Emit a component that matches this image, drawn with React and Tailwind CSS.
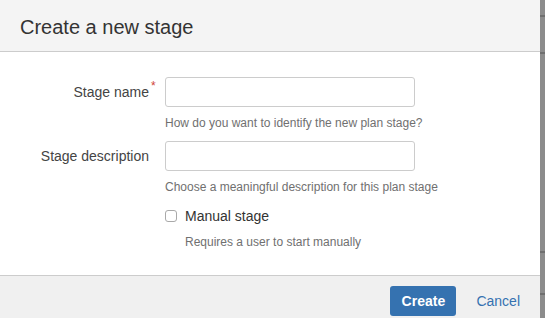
import React from 'react'

export default function App() {
  return (
    <div className="flex h-[318px] w-[545px] overflow-hidden bg-white font-['Liberation_Sans',Arial,sans-serif]">
      <div className="flex w-[540px] flex-col">
        {/* Header */}
        <div className="flex h-[52px] shrink-0 items-center border-b border-[#cccccc] bg-[#f4f4f4] px-5 pt-[2px]">
          <h2 className="text-[20px] leading-7 text-[#333333]">Create a new stage</h2>
        </div>

        {/* Body */}
        <div className="h-[223px] shrink-0 bg-white pt-[25px]">
          <FieldRow label="Stage name" required help="How do you want to identify the new plan stage?" />
          <div className="h-[10px]" />
          <FieldRow label="Stage description" help="Choose a meaningful description for this plan stage" />

          <div className="mt-[11px] pl-[165px]">
            <label className="flex items-center gap-[8px] text-[14px] leading-5 text-[#333333]">
              <span className="h-[12px] w-[12px] rounded-[3px] border border-[#a9a9a9] bg-white" />
              Manual stage
            </label>
            <p className="mt-2 pl-5 text-[12px] leading-4 text-[#707070]">Requires a user to start manually</p>
          </div>
        </div>

        {/* Footer */}
        <div className="flex flex-1 items-start justify-end border-t border-[#cccccc] bg-[#f0f0f0] pr-5 pt-[10px]">
          <button className="h-[30px] w-[66px] rounded-[3px] bg-[#3572b0] text-[14px] font-bold text-white">
            Create
          </button>
          <button className="ml-5 h-[30px] text-[14px] text-[#3572b0]">Cancel</button>
        </div>
      </div>

      {/* dimmed page behind the dialog */}
      <div className="flex flex-1 flex-col bg-[#8c8c8c]">
        <div className="h-[15px]" />
        <div className="h-[2px] bg-[#6f6f6f]" />
        <div className="h-[35px]" />
        <div className="h-[2px] bg-[#6f6f6f]" />
        <div className="h-[197px]" />
        <div className="h-[2px] bg-[#6f6f6f]" />
        <div className="h-[40px]" />
        <div className="h-[2px] bg-[#6f6f6f]" />
      </div>
    </div>
  )
}

function FieldRow({ label, required, help }) {
  return (
    <div className="flex gap-4">
      <div className="w-[149px] shrink-0 text-right text-[14px] leading-[30px] text-[#444444]">
        <span className="relative">
          {label}
          {required && (
            <span className="absolute left-full top-[-6px] ml-[2px] text-[12px] leading-4 text-[#d04437]">*</span>
          )}
        </span>
      </div>
      <div>
        <input className="h-[30px] w-[250px] rounded-[3px] border border-[#cccccc] bg-white px-2 text-[14px] outline-none" />
        <p className="mt-2 text-[12px] leading-4 text-[#707070]">{help}</p>
      </div>
    </div>
  )
}
